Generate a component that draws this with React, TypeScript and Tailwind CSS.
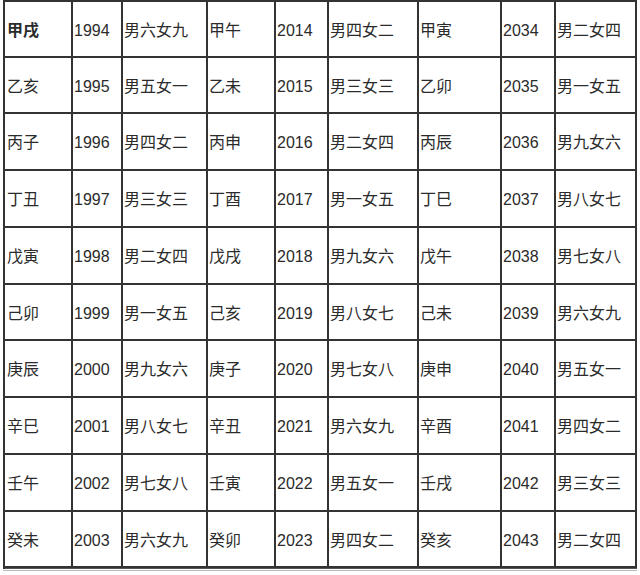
import React from "react";

const rows: string[][] = [
  ["甲戌", "1994", "男六女九", "甲午", "2014", "男四女二", "甲寅", "2034", "男二女四"],
  ["乙亥", "1995", "男五女一", "乙未", "2015", "男三女三", "乙卯", "2035", "男一女五"],
  ["丙子", "1996", "男四女二", "丙申", "2016", "男二女四", "丙辰", "2036", "男九女六"],
  ["丁丑", "1997", "男三女三", "丁酉", "2017", "男一女五", "丁巳", "2037", "男八女七"],
  ["戊寅", "1998", "男二女四", "戊戌", "2018", "男九女六", "戊午", "2038", "男七女八"],
  ["己卯", "1999", "男一女五", "己亥", "2019", "男八女七", "己未", "2039", "男六女九"],
  ["庚辰", "2000", "男九女六", "庚子", "2020", "男七女八", "庚申", "2040", "男五女一"],
  ["辛巳", "2001", "男八女七", "辛丑", "2021", "男六女九", "辛酉", "2041", "男四女二"],
  ["壬午", "2002", "男七女八", "壬寅", "2022", "男五女一", "壬戌", "2042", "男三女三"],
  ["癸未", "2003", "男六女九", "癸卯", "2023", "男四女二", "癸亥", "2043", "男二女四"],
];

const colClasses = [
  "w-[68px] pl-[2px]",
  "w-[50px] pl-[1px]",
  "w-[85px] pl-[1px]",
  "w-[68px] pl-[1px]",
  "w-[53px] pl-[1px]",
  "w-[90px] pl-[1px]",
  "w-[83px] pl-[1px]",
  "w-[54px] pl-[1px]",
  "w-[81px] pl-[1px]",
];

const rowHeights = [
  "h-[56px]",
  "h-[56px]",
  "h-[57px]",
  "h-[57px]",
  "h-[57px]",
  "h-[56px]",
  "h-[57px]",
  "h-[57px]",
  "h-[57px]",
  "h-[56px]",
];

export default function App() {
  return (
    <div
      className="w-[640px] h-[575px] bg-white overflow-hidden"
      style={{ fontFamily: '"Liberation Sans", "Noto Sans CJK SC", sans-serif' }}
    >
      <div className="ml-[3px] w-[634px] border-l-2 border-t-2 border-[#333]">
        {rows.map((row, r) => (
          <div key={r} className={`flex ${rowHeights[r]}`}>
            {row.map((cell, c) => (
              <div
                key={c}
                className={`${colClasses[c]} shrink-0 flex items-center pt-[3px] border-r-2 border-b-2 border-[#333] text-[16px] leading-none text-[#2b2b2b] whitespace-nowrap ${
                  r === 0 && c === 0 ? "font-bold" : ""
                }`}
              >
                {cell}
              </div>
            ))}
          </div>
        ))}
        <div className="h-[1px] bg-[#555]" />
      </div>
      <div className="ml-[3px] w-[634px] mt-[1px] h-[1px] bg-[#bbb]" />
    </div>
  );
}
